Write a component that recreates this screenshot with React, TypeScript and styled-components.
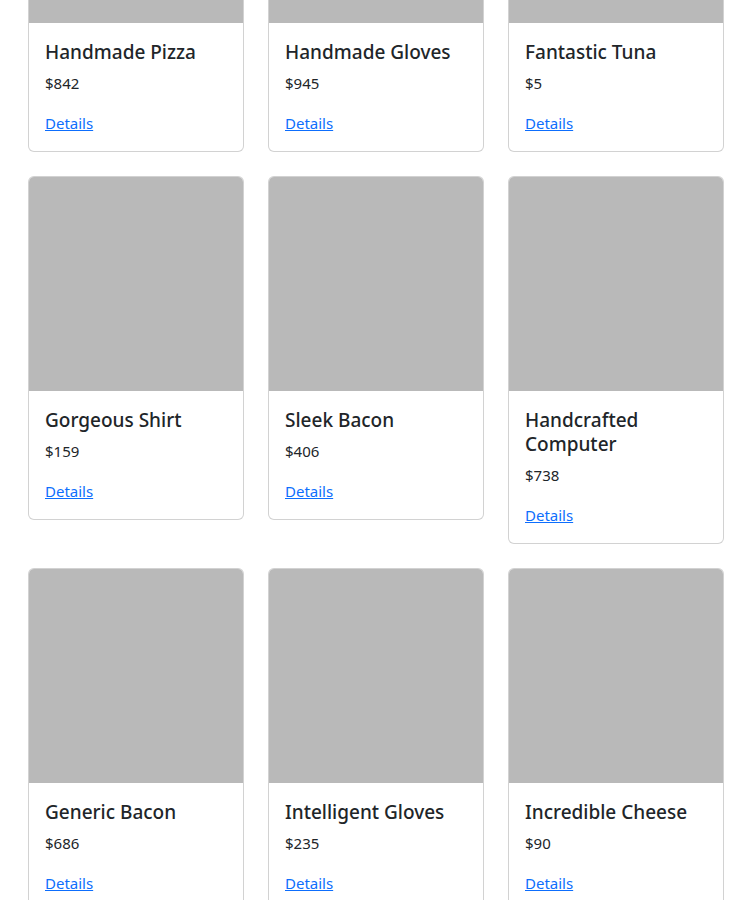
import React from "react";
import styled, { createGlobalStyle } from "styled-components";

const GlobalStyle = createGlobalStyle`
  html, body { margin: 0; padding: 0; background: #ffffff; }
  body {
    font-family: "Noto Sans", "Open Sans", sans-serif;
    color: #212529;
    font-size: 15px;
    line-height: 24px;
    overflow: hidden;
  }
`;

const Page = styled.div`
  padding: 0 27px 0 28px;
  margin-top: -192px;
`;

const Grid = styled.div`
  display: grid;
  grid-template-columns: repeat(3, 216px);
  column-gap: 24px;
  row-gap: 24px;
  align-items: start;
`;

const Card = styled.div`
  display: flex;
  flex-direction: column;
  border: 1px solid rgba(0, 0, 0, 0.175);
  border-radius: 6px;
  overflow: hidden;
  background: #fff;
`;

const Thumb = styled.div`
  width: 100%;
  aspect-ratio: 1 / 1;
  background: #b9b9b9;
`;

const Body = styled.div`
  padding: 16px;
`;

const Title = styled.h5`
  margin: 0 0 7px;
  padding-top: 1px;
  font-size: 19px;
  font-weight: 500;
  line-height: 24px;
`;

const Price = styled.p`
  margin: 0 0 16px;
  font-size: 15px;
  line-height: 24px;
`;

const DetailsLink = styled.a`
  color: #0d6efd;
  text-decoration: underline;
  font-size: 15px;
  line-height: 24px;
  display: inline-block;
`;

const products = [
  { name: "Handmade Pizza", price: 842 },
  { name: "Handmade Gloves", price: 945 },
  { name: "Fantastic Tuna", price: 5 },
  { name: "Gorgeous Shirt", price: 159 },
  { name: "Sleek Bacon", price: 406 },
  { name: "Handcrafted Computer", price: 738 },
  { name: "Generic Bacon", price: 686 },
  { name: "Intelligent Gloves", price: 235 },
  { name: "Incredible Cheese", price: 90 },
];

export default function App() {
  return (
    <>
      <GlobalStyle />
      <Page>
        <Grid>
          {products.map((p) => (
            <Card key={p.name}>
              <Thumb />
              <Body>
                <Title>{p.name}</Title>
                <Price>${p.price}</Price>
                <DetailsLink href="#">Details</DetailsLink>
              </Body>
            </Card>
          ))}
        </Grid>
      </Page>
    </>
  );
}
